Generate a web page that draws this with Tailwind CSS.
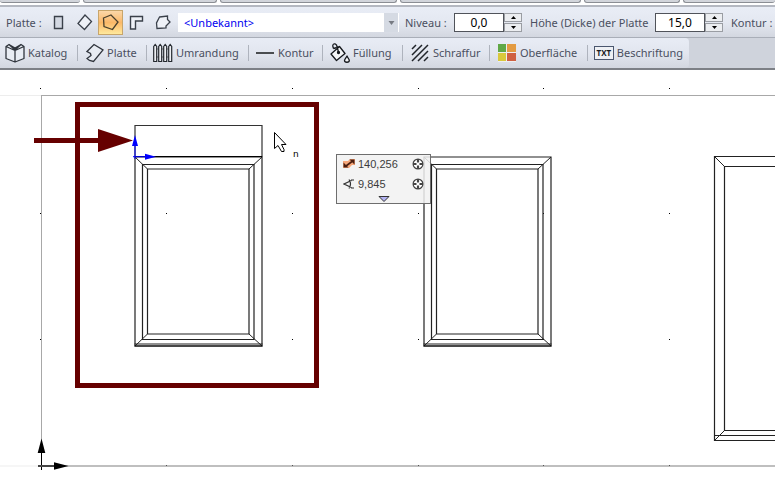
<!DOCTYPE html>
<html lang="de" class="h-full">

<head>
    <meta charset="UTF-8">
    <meta name="viewport" content="width=device-width, initial-scale=1.0">
    <title>Platte</title>
    <script src="https://cdn.jsdelivr.net/npm/@tailwindcss/browser@4"></script>
</head>

<body class="flex h-full min-h-screen flex-col overflow-hidden bg-white font-['Noto_Sans','Open_Sans',sans-serif] text-[11px] leading-4 text-[#4a4f60]">
    <!-- Lower edge of the document tabs -->
    <div class="flex h-[3px] shrink-0 gap-[3px] bg-white" aria-hidden="true">
        <div class="w-20 shrink-0 rounded-b-sm border-b border-[#8b8e94] bg-[#d2d5db]"></div>
        <div class="w-[134px] shrink-0 rounded-b-sm border-x border-b border-[#8b8e94] bg-[#d2d5db]"></div>
        <div class="w-[177px] shrink-0 rounded-b-sm border-x border-b border-[#8b8e94] bg-[#d2d5db]"></div>
        <div class="w-[181px] shrink-0 rounded-b-sm border-x border-b border-[#8b8e94] bg-[#d2d5db]"></div>
        <div class="w-24 shrink-0 rounded-b-sm border-x border-b border-[#8b8e94] bg-[#d2d5db]"></div>
        <div class="grow rounded-b-sm border-l border-b border-[#8b8e94] bg-[#d2d5db]"></div>
    </div>
    <div class="h-0.5 shrink-0 bg-white"></div>

    <!-- Properties -->
    <form class="flex h-8 shrink-0 items-center overflow-hidden border-t-2 border-[#b4b8c1] bg-linear-to-b from-[#e9edf6] via-[#e4e8f1] to-[#d3d7e0] pt-px pl-1.5 whitespace-nowrap">
        <span class="w-10 shrink-0">Platte :</span>
        <div class="flex w-[132px] shrink-0 items-center gap-px">
            <button type="button" aria-label="Rechteck" class="flex h-[25px] w-[25px] items-center justify-center">
                <svg width="19" height="19" fill="#d3d8e2" stroke="#3a404a" stroke-width="1.4"><path d="M5.500 3.500h8v12h-8z"/></svg>
            </button>
            <button type="button" aria-label="Gedrehtes Rechteck" class="flex h-[25px] w-[25px] items-center justify-center">
                <svg width="19" height="19" fill="#eef1f7" stroke="#3a404a" stroke-width="1.3"><path d="M10 2L16.500 8.500L9.500 16.500L3 10.500Z"/></svg>
            </button>
            <button type="button" aria-label="Polygon" aria-pressed="true" class="flex h-[25px] w-[25px] items-center justify-center border border-[#c8a56a] bg-linear-to-b from-[#fbd7a8] via-[#fab868] to-[#ffe99c]">
                <svg width="19" height="19" fill="none" stroke="#49402d" stroke-width="1.3"><path d="M2.500 5L10 2L17 9L11.500 16.500L3 13.500Z"/></svg>
            </button>
            <button type="button" aria-label="Winkel" class="flex h-[25px] w-[25px] items-center justify-center">
                <svg width="19" height="19" fill="#eef1f7" stroke="#3a404a" stroke-width="1.4"><path d="M3.500 3.500h12v4.500h-7v8h-5z"/></svg>
            </button>
            <button type="button" aria-label="Freie Form" class="flex h-[25px] w-[25px] items-center justify-center">
                <svg width="19" height="19" fill="#eef1f7" stroke="#3a404a" stroke-width="1.3"><path d="M6.500 4L14.500 3V6.500L17 9L13 13V15L4 15.500L3.500 10Z"/></svg>
            </button>
        </div>
        <div class="relative h-[19px] w-[221px] shrink-0">
            <select aria-label="Material" class="h-[19px] w-full appearance-none bg-white pl-1.5 font-['Noto_Sans'] text-[11px] leading-[19px] text-[#0000f0]">
                <option>&lt;Unbekannt&gt;</option>
            </select>
            <span class="pointer-events-none absolute top-0 right-px flex h-[19px] w-3.5 items-center justify-center bg-[#d5dae3]">
                <svg width="7" height="4" fill="#777b83"><path d="M0.500 0h6L3.500 4z"/></svg>
            </span>
        </div>
        <label for="niveau" class="ml-1.5 w-[49px] shrink-0">Niveau :</label>
        <input id="niveau" value="0,0" class="h-[19px] w-[50px] shrink-0 border border-[#50535a] bg-white text-center text-xs text-black">
        <div class="flex w-[18px] shrink-0 flex-col gap-px">
            <button type="button" aria-label="Niveau erhöhen" class="flex h-[9px] items-center justify-center border border-[#9a9da3] bg-[#eceef1]"><svg width="5" height="3"><path d="M0 3h5L2.500 0z"/></svg></button>
            <button type="button" aria-label="Niveau verringern" class="flex h-[9px] items-center justify-center border border-[#9a9da3] bg-[#eceef1]"><svg width="5" height="3"><path d="M0 0h5L2.500 3z"/></svg></button>
        </div>
        <label for="dicke" class="ml-2 w-[125px] shrink-0">Höhe (Dicke) der Platte</label>
        <input id="dicke" value="15,0" class="h-[19px] w-[50px] shrink-0 border border-[#50535a] bg-white text-center text-xs text-black">
        <div class="flex w-[18px] shrink-0 flex-col gap-px">
            <button type="button" aria-label="Dicke erhöhen" class="flex h-[9px] items-center justify-center border border-[#9a9da3] bg-[#eceef1]"><svg width="5" height="3"><path d="M0 3h5L2.500 0z"/></svg></button>
            <button type="button" aria-label="Dicke verringern" class="flex h-[9px] items-center justify-center border border-[#9a9da3] bg-[#eceef1]"><svg width="5" height="3"><path d="M0 0h5L2.500 3z"/></svg></button>
        </div>
        <span class="ml-2 shrink-0">Kontur :</span>
    </form>

    <!-- Categories -->
    <nav class="flex h-[33px] shrink-0 overflow-hidden border-t border-b-2 border-t-[#a9aeb8] border-b-[#7d8086] bg-[#cfd3dc] whitespace-nowrap">
        <div class="flex items-center rounded-r-sm bg-linear-to-b from-[#e8ecf5] via-[#e2e6ef] to-[#d3d7e0] pr-1.5 pl-[5px]">
            <button class="flex h-6 w-[72px] shrink-0 items-center gap-[3px]">
                <svg width="20" height="20" fill="#e8ecf3" stroke="#30353d" stroke-width="1.3" stroke-linejoin="round"><path d="M10 5L4 1.500L1 3.500V15.500L10 19L19 15.500V3.500L16 1.500L10 5V19M1 3.500L10 7.500L19 3.500M4 1.500L10 7M16 1.500L10 7"/></svg>
                Katalog
            </button>
            <span class="h-4 w-px shrink-0 bg-[#aeb3bd]"></span>
            <button class="ml-2 flex h-6 w-[60px] shrink-0 items-center gap-[3px]">
                <svg width="18" height="20" fill="#e8ecf3" stroke="#30353d" stroke-width="1.300"><path d="M8 1.500L17 7L7.500 18.500L3.500 17.500L1 15.500L5 12.500L4.500 10.500L1 8.500Z"/></svg>
                Platte
            </button>
            <span class="h-4 w-px shrink-0 bg-[#aeb3bd]"></span>
            <button class="ml-1.5 flex h-6 w-[95px] shrink-0 items-center gap-[3px]">
                <svg width="20" height="20" fill="#eef0f4" stroke="#25292f" stroke-width="1.200"><path d="M1 6h18M1 14h18" stroke="#777"/><path d="M0.700 18.500V3.500L2.200 1.500L3.700 3.500V18.500zM5.700 18.500V3.500L7.200 1.500L8.700 3.500V18.500zM10.700 18.500V3.500L12.200 1.500L13.700 3.500V18.500zM15.700 18.500V3.500L17.200 1.500L18.700 3.500V18.500z"/></svg>
                Umrandung
            </button>
            <span class="h-4 w-px shrink-0 bg-[#aeb3bd]"></span>
            <button class="ml-[7px] flex h-6 w-[66px] shrink-0 items-center gap-1">
                <svg width="18" height="20" stroke="#4a4d50" stroke-width="2"><path d="M0 10h18"/></svg>
                Kontur
            </button>
            <span class="h-4 w-px shrink-0 bg-[#aeb3bd]"></span>
            <button class="ml-[7px] flex h-6 w-[72px] shrink-0 items-center gap-[3px]">
                <svg width="20" height="20" fill="none" stroke="#15181c" stroke-width="1.300" stroke-linejoin="round"><path d="M1 11L9.500 3.500L15 10.500L6.500 17.500Z" fill="#f4f5f7"/><path d="M3.500 5.500C1.500 1 4.500 -0.500 6.500 2L8.500 9M3.500 5.500L9 4"/><circle cx="8.500" cy="9.500" r="1" fill="#15181c"/><path d="M17 13C15.500 15.500 14.500 16.500 14.500 17.500C14.500 19.800 19.300 19.800 19.300 17.500C19.300 16.500 18.200 15.500 17 13Z" fill="#f4f5f7"/></svg>
                Füllung
            </button>
            <span class="h-4 w-px shrink-0 bg-[#aeb3bd]"></span>
            <button class="ml-2 flex h-6 w-[78px] shrink-0 items-center gap-1">
                <svg width="18" height="18" stroke="#20242a" stroke-width="1.500"><path d="M1 5L5 1M1 11L11 1M1 17L17 1M7 17L17 7M13 17L17 13"/></svg>
                Schraffur
            </button>
            <span class="h-4 w-px shrink-0 bg-[#aeb3bd]"></span>
            <button class="ml-2 flex h-6 w-[89px] shrink-0 items-center gap-1">
                <svg width="18" height="18"><path fill="#eceef1" d="M0 0h18v18H0z"/><path fill="#60a846" d="M0 0h8v8H0z"/><path fill="#e39b42" d="M9 0h9v8H9z"/><path fill="#d9c83c" d="M0 9h8v8H0z"/><path fill="#cf6142" d="M9 9h9v8H9z"/></svg>
                Oberfläche
            </button>
            <span class="h-4 w-px shrink-0 bg-[#aeb3bd]"></span>
            <button class="ml-1.5 flex h-6 w-[89px] shrink-0 items-center gap-[3px]">
                <span class="flex h-3.5 w-5 items-center justify-center border border-[#4a566e] bg-[#eef0f4] font-['Open_Sans'] text-[8px] leading-3 font-bold text-[#181a1e]">TXT</span>
                Beschriftung
            </button>
        </div>
    </nav>

    <!-- Drawing area -->
    <main class="relative min-h-0 grow overflow-hidden bg-white">
        <svg class="block h-full w-full" role="img" aria-label="Grundriss">
            <defs>
                <g id="fenster" fill="none" stroke="#222" stroke-width="1.2">
                    <path d="M0.500 0.500h127v189h-127z"/>
                    <path d="M8 8h111.500v175H8z"/>
                    <path d="M13 12.500h101.500v165H13z"/>
                    <path d="M0.500 0.500L13 12.500M127.500 0.500L114.500 12.500M0.500 189.500L13 177.500M127.500 189.500L114.500 177.500" stroke-width="1"/>
                    <path d="M0 187.500h128"/>
                    <path d="M0 189.500h128" stroke="#000" stroke-width="1"/>
                </g>
            </defs>
            <g transform="translate(0 -70)">
                <path d="M0 95.500h41M0 466h41" stroke="#ededed"/>
                <path d="M41 95.500h2000M41.500 95v371" stroke="#a8a8a8"/>
                <path d="M41 466h2000" stroke="#bfbfbf" stroke-width="2"/>
                <!-- Grid points -->
                <g shape-rendering="crispEdges" fill="#000">
                    <path d="M40 88h1v1h-1zM166 88h1v1h-1zM292 88h1v1h-1zM418 88h1v1h-1zM543 88h1v1h-1zM669 88h1v1h-1z"/>
                    <path d="M40 213h1v1h-1zM166 213h1v1h-1zM292 213h1v1h-1zM418 213h1v1h-1zM543 213h1v1h-1zM669 213h1v1h-1z"/>
                    <path d="M40 339h1v1h-1zM166 339h1v1h-1zM292 339h1v1h-1zM418 339h1v1h-1zM543 339h1v1h-1zM669 339h1v1h-1z"/>
                    <path d="M166 465h1v1h-1zM292 465h1v1h-1zM418 465h1v1h-1zM543 465h1v1h-1zM669 465h1v1h-1z" fill="#555"/>
                </g>

                <path d="M77.500 104.500h239v281h-239z" fill="none" stroke="#600" stroke-width="5"/>

                <use href="#fenster" x="134.500" y="156.500"/>
                <use href="#fenster" x="423.500" y="156.500"/>
                <path d="M135 157V125.500h127V157" fill="none" stroke="#333" stroke-width="1.2"/>
                <path d="M135 156.500h127" stroke="#000"/>
                <g fill="none" stroke="#222" stroke-width="1.2">
                    <path d="M2041 156.500H714.500V440.500H2041M2041 166.500H724.500V430.500H2041M714.500 435.500H2041"/>
                    <path d="M714.500 156.500L724.500 166.500M714.500 440.500L724.500 430.500" stroke-width="1"/>
                </g>

                <path d="M34 138h64v-9l35 11.500L98 152v-9H34z" fill="#600"/>

                <g stroke="#00f" fill="#00f">
                    <path d="M135 159V145M133 156.700h13"/>
                    <path d="M135 135l3 11h-6zM156 156.700l-11 3v-6z" stroke="none"/>
                </g>
                <g fill="#000">
                    <path d="M41.500 470V450" stroke="#000"/>
                    <path d="M38 466h17" stroke="#444" stroke-width="2"/>
                    <path d="M41.500 438.500l3.800 14.500h-7.600zM68.500 466L54 462.200v7.600z"/>
                </g>

                <path d="M274.500 132.500v16l3.500-3l3.500 6h2.500v-2l-2.500-5h4.500z" fill="#fff" stroke="#000"/>
                <text x="293" y="157" class="fill-black font-['DejaVu_Sans'] text-[9px]">n</text>
            </g>
        </svg>

        <!-- Coordinate input next to the cursor -->
        <form class="absolute top-[84px] left-[336px] w-[95px] bg-[#f1f1f1]/85 px-[7px] font-['Liberation_Sans',Arial,sans-serif] text-[#3c3c3c] outline -outline-offset-1 outline-[#6e6e6e]">
            <div class="flex h-5 items-center">
                <label for="abstand" aria-label="Abstand" class="w-[15px] shrink-0">
                    <svg width="12" height="10"><path d="M0 2h5l2-2h5v6h-3L6 9H0z" fill="#f6a77a"/><path d="M3 7L9 2.500" stroke="#4a1e10" stroke-width="1.600"/><path d="M6.500 0.500h5v5zM0.500 3.500v5h5z" fill="#4a1e10"/></svg>
                </label>
                <input id="abstand" value="140,256" class="h-4 w-0 grow bg-transparent text-[11px]">
                <button type="button" aria-label="Abstand fixieren">
                    <svg width="12" height="12" fill="none" stroke="#444"><circle cx="6" cy="6" r="4.900" fill="#fff" stroke-width="1.200"/><path d="M6 1v3.500M6 7.500V11M1 6h3.500M7.500 6H11" stroke-width="2.200"/></svg>
                </button>
            </div>
            <div class="flex h-5 items-center">
                <label for="winkel" aria-label="Winkel" class="w-[15px] shrink-0">
                    <svg width="12" height="10" fill="none" stroke="#333" stroke-width="1.200"><path d="M8.500 1.500L1 5L8.500 8.500M6 0.500Q9 5 6 9.500M8 1h3M8 9h3"/></svg>
                </label>
                <input id="winkel" value="9,845" class="h-4 w-0 grow bg-transparent text-[11px]">
                <button type="button" aria-label="Winkel fixieren">
                    <svg width="12" height="12" fill="none" stroke="#444"><circle cx="6" cy="6" r="4.900" fill="#fff" stroke-width="1.200"/><path d="M6 1v3.500M6 7.500V11M1 6h3.500M7.500 6H11" stroke-width="2.200"/></svg>
                </button>
            </div>
            <button type="button" aria-label="Mehr" class="flex h-2.5 w-full items-center justify-center">
                <svg width="12" height="7" fill="#b4b4f4" stroke="#333"><path d="M1 0.500h10L6 5.500z"/></svg>
            </button>
        </form>
    </main>
</body>

</html>
